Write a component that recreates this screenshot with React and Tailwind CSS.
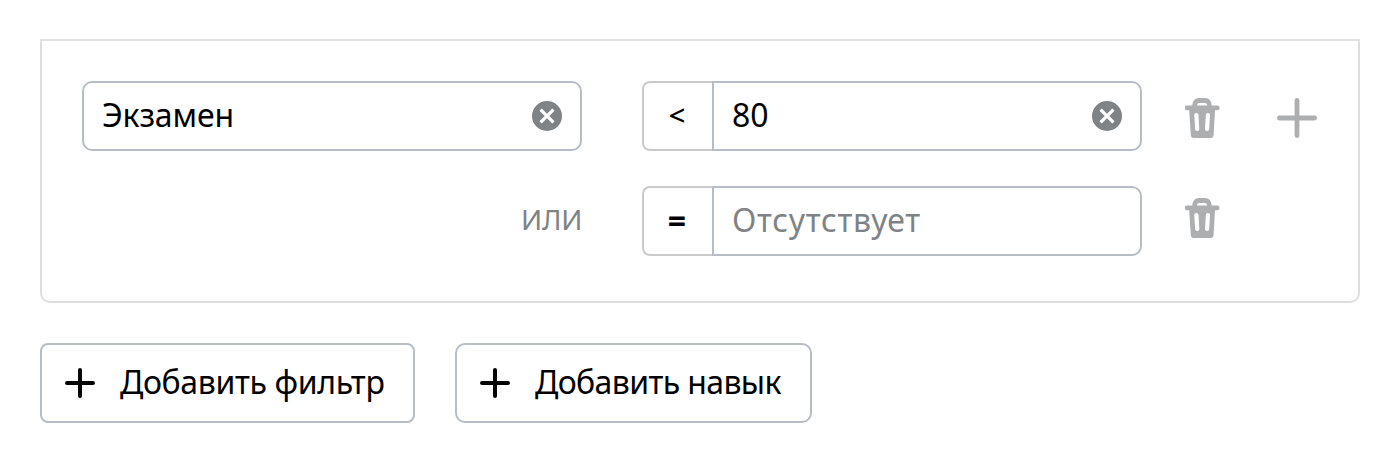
function TrashIcon() {
  return (
    <svg width="35" height="40" viewBox="0 0 35 40" fill="none">
      <path
        fill="#adaeaf"
        fillRule="evenodd"
        d="M7.300 7.600C7.600 3 10 0 14 0h6c4 0 6.400 3 6.700 7.600h5.600a2.250 2.250 0 0 1 0 4.600H30L28.600 37c-.1 2-1.200 3-3 3H8.800c-1.800 0-2.900-1-3-3L4.200 12.200H2a2.250 2.250 0 0 1 0-4.600ZM12 7.500h10.200C21.900 5.700 21.200 5 19.700 5h-5.200c-1.500 0-2.200.7-2.500 2.500Z"
      />
      <path d="M11.400 17 12.200 31M22.900 17 22.100 31" stroke="#fff" strokeWidth="4.200" strokeLinecap="round" />
    </svg>
  );
}

function ClearIcon() {
  return (
    <svg width="30" height="30" viewBox="0 0 30 30">
      <circle cx="15" cy="15" r="15" fill="#7f8386" />
      <path d="m8.600 8.600 12.800 12.800M21.400 8.600 8.600 21.400" stroke="#fff" strokeWidth="3.200" />
    </svg>
  );
}

function PlusIcon({ size, color, stroke }) {
  const mid = size / 2;
  const end = size - stroke / 2;
  return (
    <svg width={size} height={size} viewBox={`0 0 ${size} ${size}`}>
      <path
        d={`M${stroke / 2} ${mid}H${end}M${mid} ${stroke / 2}V${end}`}
        stroke={color}
        strokeWidth={stroke}
        strokeLinecap="round"
      />
    </svg>
  );
}

function Condition({ operator, children }) {
  return (
    <div className="flex h-[70px] w-[500px]">
      <div className="flex w-[70px] items-center justify-center rounded-l-[8px] border-2 border-r-0 border-[#cbcbcb]">
        {operator}
      </div>
      <div className="flex flex-1 items-center justify-between rounded-r-[10px] border-2 border-[#b8bdc5] px-[18px]">
        {children}
      </div>
    </div>
  );
}

export default function App() {
  return (
    <main className="flex h-[460px] w-[1400px] flex-col bg-white px-[40px] pt-[39px] font-['Noto_Sans',sans-serif] text-[32px] leading-[44px] text-black">
      <section className="flex h-[264px] flex-col gap-[35px] rounded-b-[10px] border-2 border-[#dfdfdf] pl-[40px] pt-[40px]">
        <div className="flex h-[70px]">
          <div className="flex w-[500px] items-center justify-between rounded-[10px] border-2 border-[#b8bdc5] px-[18px]">
            <span className="pb-[2px] tracking-[-0.15px]">Экзамен</span>
            <ClearIcon />
          </div>
          <div className="ml-[60px]">
            <Condition operator={<span className="pb-[2px] pr-[2px] text-[29px] font-medium">&lt;</span>}>
              <span className="pb-[2px]">80</span>
              <ClearIcon />
            </Condition>
          </div>
          <button className="ml-[43px] mt-[17px] self-start"><TrashIcon /></button>
          <button className="ml-[57px] mt-[17px] self-start"><PlusIcon size={40} color="#adaeaf" stroke={4.8} /></button>
        </div>
        <div className="flex h-[70px]">
          <div className="flex w-[500px] items-center justify-end text-[28px] text-[#808386]">
            <span className="pb-[4px] tracking-[-0.3px]">ИЛИ</span>
          </div>
          <div className="ml-[60px]">
            <Condition operator={<span className="pr-[2px] text-[32px] font-bold">=</span>}>
              <span className="pb-[2px] tracking-[0.68px] text-[#808386]">Отсутствует</span>
            </Condition>
          </div>
          <button className="ml-[43px] mt-[12px] self-start"><TrashIcon /></button>
        </div>
      </section>
      <div className="mt-[40px] flex gap-[40px]">
        <button className="flex h-[80px] w-[375px] items-center gap-[25px] rounded-[8px] border-2 border-[#b8bdc5] pl-[23px]">
          <PlusIcon size={30} color="#000" stroke={4} />
          <span className="whitespace-nowrap pb-[2px] tracking-[-0.36px]">Добавить фильтр</span>
        </button>
        <button className="flex h-[80px] w-[357px] items-center gap-[25px] rounded-[10px] border-2 border-[#b8bdc5] pl-[23px]">
          <PlusIcon size={30} color="#000" stroke={4} />
          <span className="whitespace-nowrap pb-[2px] tracking-[-0.62px]">Добавить навык</span>
        </button>
      </div>
    </main>
  );
}
